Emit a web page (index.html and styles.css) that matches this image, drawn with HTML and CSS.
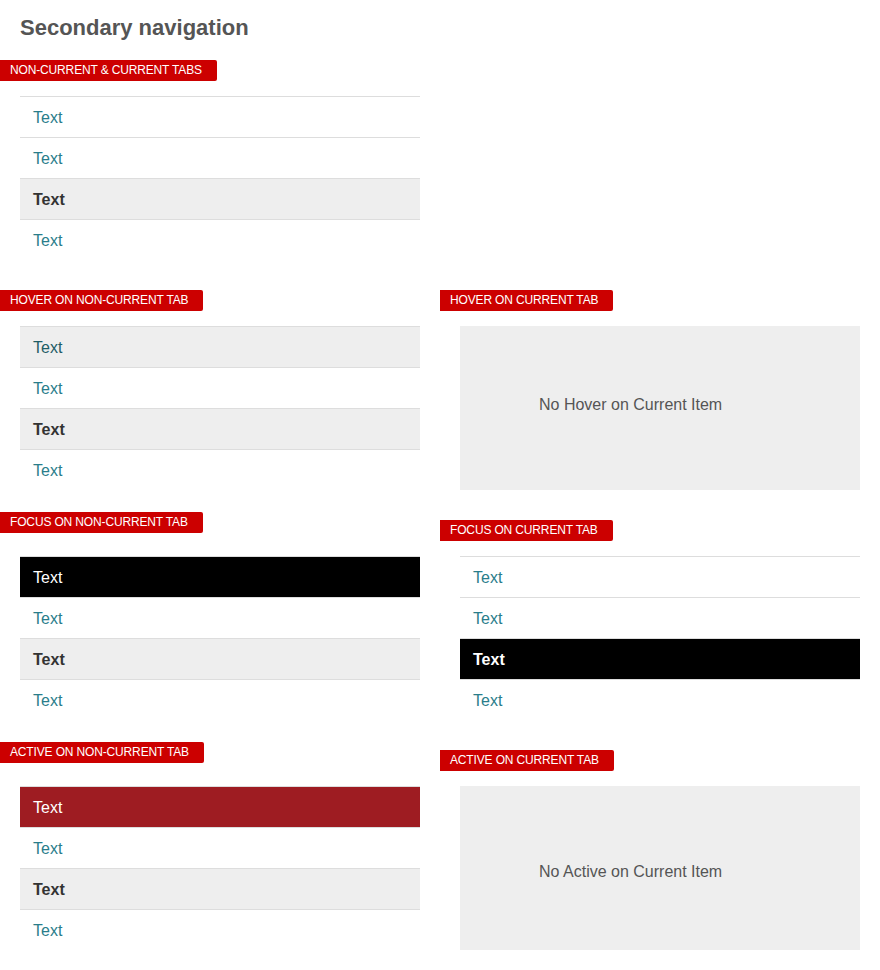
FILE: index.html
```html
<!DOCTYPE html>
<html lang="en">
<head>
<meta charset="utf-8">
<title>Secondary navigation</title>
<link rel="stylesheet" href="styles.css">
</head>
<body>
<h1 class="title">Secondary navigation</h1>

<div class="row row--first">
  <section class="cell">
    <div class="label">NON-CURRENT &amp; CURRENT TABS</div>
    <ul class="nav">
      <li class="nav__item">Text</li>
      <li class="nav__item">Text</li>
      <li class="nav__item nav__item--current">Text</li>
      <li class="nav__item">Text</li>
    </ul>
  </section>
</div>

<div class="row">
  <section class="cell">
    <div class="label">HOVER ON NON-CURRENT TAB</div>
    <ul class="nav">
      <li class="nav__item nav__item--hover">Text</li>
      <li class="nav__item">Text</li>
      <li class="nav__item nav__item--current">Text</li>
      <li class="nav__item">Text</li>
    </ul>
  </section>
  <section class="cell">
    <div class="label">HOVER ON CURRENT TAB</div>
    <div class="note note--up">No Hover on Current Item</div>
  </section>
</div>

<div class="row">
  <section class="cell">
    <div class="label label--tall">FOCUS ON NON-CURRENT TAB</div>
    <ul class="nav">
      <li class="nav__item nav__item--focus">Text</li>
      <li class="nav__item">Text</li>
      <li class="nav__item nav__item--current">Text</li>
      <li class="nav__item">Text</li>
    </ul>
  </section>
  <section class="cell">
    <div class="label label--low">FOCUS ON CURRENT TAB</div>
    <ul class="nav">
      <li class="nav__item">Text</li>
      <li class="nav__item">Text</li>
      <li class="nav__item nav__item--current nav__item--focus">Text</li>
      <li class="nav__item">Text</li>
    </ul>
  </section>
</div>

<div class="row">
  <section class="cell">
    <div class="label label--tall">ACTIVE ON NON-CURRENT TAB</div>
    <ul class="nav">
      <li class="nav__item nav__item--active">Text</li>
      <li class="nav__item">Text</li>
      <li class="nav__item nav__item--current">Text</li>
      <li class="nav__item">Text</li>
    </ul>
  </section>
  <section class="cell">
    <div class="label label--low">ACTIVE ON CURRENT TAB</div>
    <div class="note note--down">No Active on Current Item</div>
  </section>
</div>
</body>
</html>
```

FILE: styles.css
```css
* { box-sizing: border-box; }

body {
  margin: 0;
  font-family: "Liberation Sans", Arial, Helvetica, sans-serif;
  background: #fff;
  color: #333;
}

.title {
  margin: 15px 0 20px 20px;
  font-size: 22px;
  line-height: 25px;
  font-weight: bold;
  color: #555;
}

.row {
  display: grid;
  grid-template-columns: 440px 440px;
  align-items: start;
  margin-bottom: 22px;
}

.row--first { margin-bottom: 30px; }

.cell {
  display: flex;
  flex-direction: column;
  align-items: flex-start;
}

.label {
  height: 21px;
  line-height: 21px;
  padding: 0 15px 0 10px;
  margin-bottom: 15px;
  background: #cc0000;
  color: #fff;
  font-size: 12px;
  letter-spacing: -0.15px;
  border-radius: 0 2px 2px 0;
  white-space: nowrap;
}

.label--tall { margin-bottom: 23px; }
.label--low { margin-top: 8px; }

.nav {
  list-style: none;
  margin: 0 0 0 20px;
  padding: 0;
  width: 400px;
}

.nav__item {
  height: 41px;
  line-height: 41px;
  border-top: 1px solid #dddddd;
  padding-left: 13px;
  font-size: 16px;
  color: #2a7d8b;
  background: #fff;
  overflow: hidden;
}

.nav__item--current {
  background: #eeeeee;
  color: #333;
  font-weight: bold;
  border-bottom: 1px solid #dddddd;
  height: 42px;
  line-height: 41px;
}

.nav__item--current + .nav__item { border-top: none; height: 40px; line-height: 41px; }

.nav__item--hover {
  background: #eeeeee;
  color: #1e5d66;
}

.nav__item--focus {
  background: #000;
  color: #fff;
}

.nav__item--active {
  background: #9e1c22;
  color: #fff;
}

.note {
  margin-left: 20px;
  width: 400px;
  height: 164px;
  background: #eeeeee;
  color: #555;
  font-size: 16px;
  display: flex;
  align-items: center;
  padding-left: 79px;
}

.note--up { padding-bottom: 6px; }
.note--down { padding-top: 8px; }
```
